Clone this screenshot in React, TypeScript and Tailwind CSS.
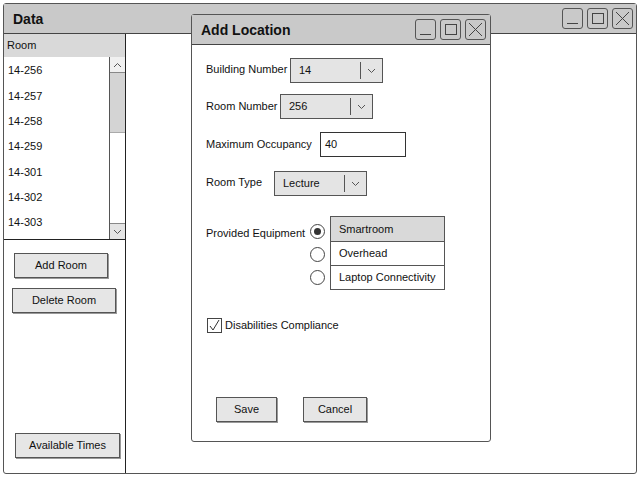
import React from 'react';

const rooms = ['14-256', '14-257', '14-258', '14-259', '14-301', '14-302', '14-303'];
const roomHeights = ['h-[25px]', 'h-[26px]', 'h-[25px]', 'h-[25px]', 'h-[26px]', 'h-[25px]', 'h-[25px]'];
const equipment = ['Smartroom', 'Overhead', 'Laptop Connectivity'];

function WinButtons() {
  return (
    <div className="flex gap-[4px]">
      <div className="w-[21px] h-[21px] border border-[#555] rounded-[3px] flex items-end justify-center pb-[4px]">
        <div className="w-[11px] h-[1px] bg-[#444]" />
      </div>
      <div className="w-[21px] h-[21px] border border-[#555] rounded-[3px] flex items-center justify-center">
        <div className="w-[12px] h-[11px] border border-[#444]" />
      </div>
      <div className="w-[21px] h-[21px] border border-[#555] rounded-[3px] flex items-center justify-center">
        <svg width="15" height="15" viewBox="0 0 15 15">
          <path d="M1 1 L14 14 M14 1 L1 14" stroke="#444" strokeWidth="1" fill="none" />
        </svg>
      </div>
    </div>
  );
}

function Chevron({ up = false }: { up?: boolean }) {
  return (
    <svg width="9" height="6" viewBox="0 0 9 6">
      <polyline points={up ? '1,5 4.5,1.5 8,5' : '1,1 4.5,4.5 8,1'} stroke="#555" strokeWidth="1" fill="none" />
    </svg>
  );
}

function Select({ value, width }: { value: string; width: string }) {
  return (
    <div className={`${width} h-[25px] border border-[#555] bg-[#e4e4e4] flex items-center`}>
      <span className="flex-1 pl-[8px] text-[11px]">{value}</span>
      <div className="w-[1px] h-[17px] bg-[#555]" />
      <div className="w-[21px] flex items-center justify-center">
        <Chevron />
      </div>
    </div>
  );
}

function Btn({ label, cls }: { label: string; cls: string }) {
  return (
    <div className={`${cls} shrink-0 h-[25px] border border-[#555] bg-[#e6e6e6] flex items-center justify-center text-[11px] shadow-[1px_1px_0_#999]`}>
      {label}
    </div>
  );
}

export default function App() {
  return (
    <div className="relative w-[640px] h-[480px] bg-white text-[#111] overflow-hidden" style={{ fontFamily: '"Liberation Sans", Arial, sans-serif' }}>
      <div className="ml-[3px] mt-[3px] w-[634px] h-[471px] border border-[#555] rounded-[3px] flex flex-col">
        <div className="h-[30px] bg-[#c9c9c9] border-b border-[#444] flex items-center justify-between pl-[9px] pr-[3px]">
          <span className="text-[14px] font-bold mt-[1px]">Data</span>
          <WinButtons />
        </div>
        <div className="flex flex-1">
          <div className="w-[122px] border-r border-[#222] flex flex-col">
            <div className="h-[23px] bg-[#d9d9d9] flex items-center pl-[3px] text-[11px]">Room</div>
            <div className="flex h-[183px] border-b border-[#222]">
              <div className="flex-1 flex flex-col pt-[1px]">
                {rooms.map((r, i) => (
                  <div key={r} className={`${roomHeights[i]} shrink-0 flex items-center pl-[4px] text-[11px]`}>{r}</div>
                ))}
              </div>
              <div className="w-[16px] border-l border-[#555] flex flex-col bg-white">
                <div className="h-[16px] border-b border-[#888] flex items-center justify-center bg-[#f0f0f0]">
                  <Chevron up />
                </div>
                <div className="h-[60px] bg-[#d4d4d4] border-b border-[#aaa]" />
                <div className="flex-1" />
                <div className="h-[16px] border-t border-[#888] flex items-center justify-center bg-[#e4e4e4]">
                  <Chevron />
                </div>
              </div>
            </div>
            <Btn label="Add Room" cls="ml-[10px] mt-[13px] w-[94px]" />
            <Btn label="Delete Room" cls="ml-[8px] mt-[10px] w-[104px]" />
            <div className="flex-1" />
            <Btn label="Available Times" cls="ml-[11px] mb-[15px] w-[105px]" />
          </div>
          <div className="flex-1" />
        </div>
      </div>

      <div className="absolute left-[191px] top-[14px] w-[300px] h-[428px] bg-white border border-[#555] rounded-[3px] flex flex-col">
        <div className="h-[30px] bg-[#c9c9c9] border-b border-[#444] flex items-center justify-between pl-[9px] pr-[4px]">
          <span className="text-[14px] font-bold mt-[1px]">Add Location</span>
          <div className="-mt-[1px]">
            <WinButtons />
          </div>
        </div>
        <div className="flex flex-col pl-[14px] text-[11px]">
          <div className="flex items-center mt-[13px]">
            <span className="w-[84px] -mt-[3px]">Building Number</span>
            <Select value="14" width="w-[93px]" />
          </div>
          <div className="flex items-center mt-[11px]">
            <span className="w-[74px]">Room Number</span>
            <Select value="256" width="w-[93px]" />
          </div>
          <div className="flex items-center mt-[13px]">
            <span className="w-[114px]">Maximum Occupancy</span>
            <div className="w-[86px] h-[25px] border border-[#333] bg-white flex items-center pl-[4px]">40</div>
          </div>
          <div className="flex items-center mt-[14px]">
            <span className="w-[68px] -mt-[2px]">Room Type</span>
            <Select value="Lecture" width="w-[93px]" />
          </div>
          <div className="flex mt-[20px]">
            <span className="w-[104px] mt-[9px]">Provided Equipment</span>
            <div className="flex flex-col w-[20px] pt-[8px] gap-[8px]">
              {equipment.map((e, i) => (
                <div key={e} className="w-[15px] h-[15px] rounded-full border border-[#444] flex items-center justify-center">
                  {i === 0 && <div className="w-[7px] h-[7px] rounded-full bg-[#333]" />}
                </div>
              ))}
            </div>
            <div className="w-[115px] border border-[#555] flex flex-col">
              {equipment.map((e, i) => (
                <div key={e} className={`h-[24px] flex items-center pl-[8px] ${i === 0 ? 'bg-[#d9d9d9]' : 'border-t border-[#555]'}`}>{e}</div>
              ))}
            </div>
          </div>
          <div className="flex items-center mt-[27px] ml-[1px]">
            <div className="w-[15px] h-[15px] border border-[#444] flex items-center justify-center">
              <svg width="13" height="13" viewBox="0 0 13 13">
                <polyline points="2,7 5,11 11,1" stroke="#333" strokeWidth="1" fill="none" />
              </svg>
            </div>
            <span className="ml-[3px]">Disabilities Compliance</span>
          </div>
          <div className="flex mt-[63px] ml-[10px]">
            <Btn label="Save" cls="w-[61px]" />
            <Btn label="Cancel" cls="ml-[26px] w-[64px]" />
          </div>
        </div>
      </div>
    </div>
  );
}
